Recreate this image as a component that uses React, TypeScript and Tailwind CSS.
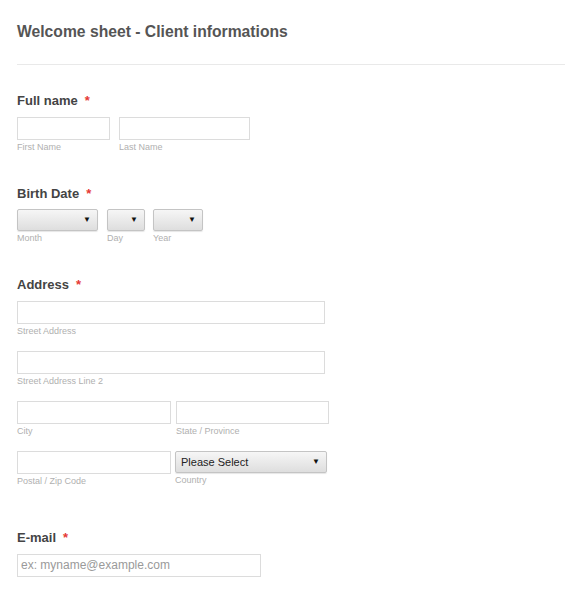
import React from "react";

const font = { fontFamily: '"Liberation Sans", Arial, sans-serif' };

const Label = ({ text, className }: { text: string; className?: string }) => (
    <div className={`h-[15px] text-[13px] leading-[15px] font-bold text-[#444] ${className ?? ""}`}>
        {text}
        <span className="ml-[7px] text-[#e53935]">*</span>
    </div>
);

const Sub = ({ text }: { text: string }) => (
    <div className="mt-[2px] h-[10px] text-[9px] leading-[11px] text-[#b0b0b0]">{text}</div>
);

const Input = ({ w, placeholder }: { w: string; placeholder?: string }) => (
    <div className={`${w} h-[23px] border border-[#dcdcdc] bg-white px-[3px] text-[12px] leading-[21px] text-[#9a9a9a]`}>
        {placeholder}
    </div>
);

const Select = ({ w, text }: { w: string; text?: string }) => (
    <div className={`${w} h-[22px] flex items-center justify-between rounded-[2px] border border-[#c4c4c4] bg-gradient-to-b from-[#f6f6f6] to-[#dedede] pl-[5px] pr-[6px] shadow-[0_1px_1px_rgba(0,0,0,0.1)]`}>
        <span className="text-[11px] leading-none text-[#222]">{text}</span>
        <span className="text-[8px] leading-none text-[#111]">▼</span>
    </div>
);

export default function App() {
    return (
        <div className="min-h-[590px] w-[572px] bg-white pl-[17px] pr-[7px]" style={font}>
            <div className="pt-[23px] h-[40px] text-[15.7px] leading-[17px] font-bold text-[#555]">
                Welcome sheet - Client informations
            </div>
            <div className="mt-[24px] h-px bg-[#e9e9e9]" />

            <Label text="Full name" className="mt-[28px]" />
            <div className="mt-[9px] flex gap-[9px]">
                <div>
                    <Input w="w-[93px]" />
                    <Sub text="First Name" />
                </div>
                <div>
                    <Input w="w-[131px]" />
                    <Sub text="Last Name" />
                </div>
            </div>

            <Label text="Birth Date" className="mt-[34px]" />
            <div className="mt-[8px] flex">
                <div className="mr-[9px]">
                    <Select w="w-[81px]" />
                    <Sub text="Month" />
                </div>
                <div className="mr-[8px]">
                    <Select w="w-[38px]" />
                    <Sub text="Day" />
                </div>
                <div>
                    <Select w="w-[50px]" />
                    <Sub text="Year" />
                </div>
            </div>

            <Label text="Address" className="mt-[34px]" />
            <div className="mt-[9px]">
                <Input w="w-[308px]" />
                <Sub text="Street Address" />
            </div>
            <div className="mt-[15px]">
                <Input w="w-[308px]" />
                <Sub text="Street Address Line 2" />
            </div>
            <div className="mt-[15px] flex gap-[5px]">
                <div>
                    <Input w="w-[154px]" />
                    <Sub text="City" />
                </div>
                <div>
                    <Input w="w-[153px]" />
                    <Sub text="State / Province" />
                </div>
            </div>
            <div className="mt-[15px] flex gap-[4px]">
                <div>
                    <Input w="w-[154px]" />
                    <Sub text="Postal / Zip Code" />
                </div>
                <div>
                    <Select w="w-[152px]" text="Please Select" />
                    <Sub text="Country" />
                </div>
            </div>

            <Label text="E-mail" className="mt-[44px]" />
            <div className="mt-[9px]">
                <Input w="w-[244px]" placeholder="ex: myname@example.com" />
            </div>
        </div>
    );
}
